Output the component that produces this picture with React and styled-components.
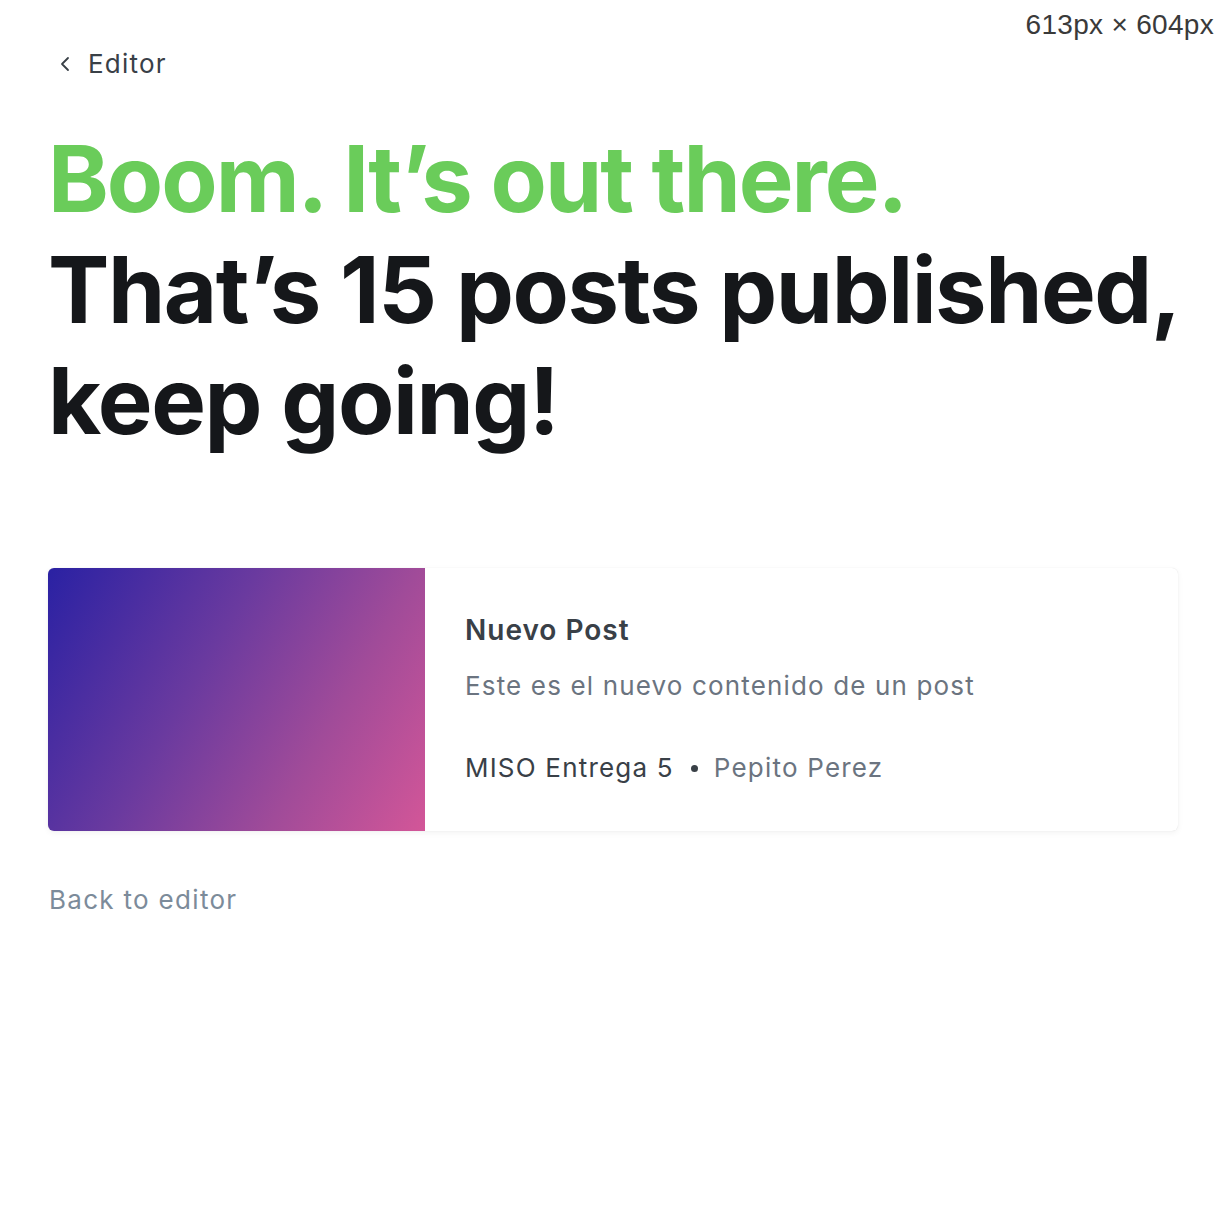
import styled, { createGlobalStyle } from 'styled-components';

const GlobalStyle = createGlobalStyle`
  html, body { margin: 0; padding: 0; background: #fff; }
  body { font-family: Inter, "Noto Sans", sans-serif; -webkit-font-smoothing: antialiased; }
`;

const Page = styled.div`
  position: relative;
  min-height: 1208px;
  padding: 40px 48px 0 48px;
  box-sizing: border-box;
`;

const SizeLabel = styled.div`
  position: absolute;
  top: 9px;
  right: 12px;
  font-family: "Liberation Sans", Arial, sans-serif;
  font-size: 28px;
  letter-spacing: 0.3px;
  color: #3a3a3a;
`;

const BackLink = styled.a`
  display: inline-flex;
  align-items: center;
  gap: 12px;
  padding-left: 8px;
  font-size: 26px;
  letter-spacing: 1.2px;
  color: #394047;
  text-decoration: none;
  line-height: 48px;
  svg { width: 20px; height: 20px; }
`;

const Headline = styled.h1`
  margin: 35px 0 0 0;
  font-size: 92px;
  line-height: 111px;
  font-weight: 700;
  letter-spacing: -0.016em;
  color: #15171a;
`;

const Green = styled.span`
  display: block;
  color: #6acc5a;
  letter-spacing: -0.022em;
`;

const Card = styled.div`
  display: flex;
  margin-top: 112px;
  height: 263px;
  width: 1130px;
  border-radius: 6px;
  background: #fff;
  box-shadow: 0 0 1px rgba(0,0,0,0.14), 0 2px 6px rgba(0,0,0,0.05);
  overflow: hidden;
`;

const Thumb = styled.div`
  flex: 0 0 377px;
  background: linear-gradient(120deg, #2a21a3 0%, #6a3a9f 40%, #a04b99 70%, #d35698 100%);
`;

const Body = styled.div`
  display: flex;
  flex-direction: column;
  padding: 42px 40px;
`;

const Title = styled.div`
  font-size: 28px;
  font-weight: 600;
  letter-spacing: 1px;
  color: #394047;
  line-height: 40px;
`;

const Excerpt = styled.div`
  margin-top: 16px;
  font-size: 26px;
  color: #6b7480;
  line-height: 40px;
  letter-spacing: 1.15px;
`;

const Meta = styled.div`
  display: flex;
  align-items: center;
  margin-top: 42px;
  font-size: 26px;
  line-height: 40px;
  letter-spacing: 1.2px;
`;

const Pub = styled.span`
  color: #394047;
`;

const Dot = styled.span`
  width: 7px;
  height: 7px;
  border-radius: 50%;
  background: #394047;
  margin: 0 16px 0 17px;
`;

const Author = styled.span`
  color: #6b7480;
`;

const BackButton = styled.div`
  margin-top: 53px;
  font-size: 26px;
  color: #7c8b9a;
  letter-spacing: 1.3px;
  padding-left: 1px;
`;

export default function App() {
  return (
    <>
      <GlobalStyle />
      <Page>
        <SizeLabel>613px × 604px</SizeLabel>
        <BackLink href="#">
          <svg viewBox="0 0 20 20" fill="none" stroke="#394047" strokeWidth="1.8" strokeLinecap="round" strokeLinejoin="round">
            <path d="M12 4 L6 10 L12 16" />
          </svg>
          Editor
        </BackLink>
        <Headline>
          <Green>Boom. It’s out there.</Green>
          That’s 15 posts published, keep going!
        </Headline>
        <Card>
          <Thumb />
          <Body>
            <Title>Nuevo Post</Title>
            <Excerpt>Este es el nuevo contenido de un post</Excerpt>
            <Meta>
              <Pub>MISO Entrega 5</Pub>
              <Dot />
              <Author>Pepito Perez</Author>
            </Meta>
          </Body>
        </Card>
        <BackButton>Back to editor</BackButton>
      </Page>
    </>
  );
}
